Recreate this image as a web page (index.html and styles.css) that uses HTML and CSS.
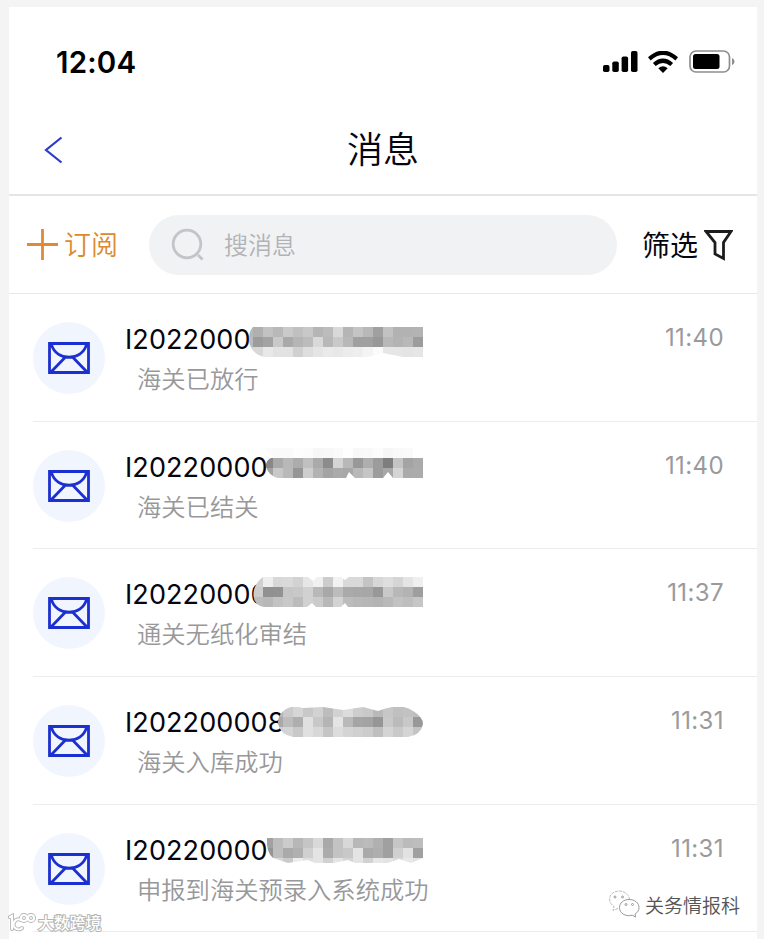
FILE: index.html
```html
<!DOCTYPE html>
<html lang="zh-CN">
<head>
    <meta charset="UTF-8">
    <meta name="viewport" content="width=device-width, initial-scale=1.0">
    <title>消息</title>
    <link rel="stylesheet" href="styles.css">
</head>
<body>
    <svg class="symbols" width="0" height="0">
        <symbol id="mail" viewBox="0 0 42 32">
            <path d="M1.5 1.5h39v29h-39zM3.500 2.500C8 19.500 34 19.500 38.500 2.500M3 30l14-14.500M39 30L25 15.500" fill="none" stroke="#1c2fd0" stroke-width="2.800"/>
        </symbol>
    </svg>

    <div class="screen">
        <div class="status-bar">
            <span class="clock">12:04</span>
            <svg class="signal" width="35" height="21" viewBox="0 0 35 21">
                <rect x="0" y="14" width="6.500" height="7" rx="1.800"/>
                <rect x="9.300" y="10.500" width="6.500" height="10.500" rx="1.800"/>
                <rect x="18.600" y="5.500" width="6.500" height="15.500" rx="1.800"/>
                <rect x="28" y="0" width="6.500" height="21" rx="1.800"/>
            </svg>
            <svg class="wifi" width="30" height="22" viewBox="0 0 30 22">
                <path d="M1.300 7.800Q15-4.200 28.700 7.800M6.300 13.500Q15 6 23.700 13.500" fill="none" stroke="#000" stroke-width="4.200"/>
                <path d="M10.300 17.300Q15 13.300 19.700 17.300L15 22z"/>
            </svg>
            <svg class="battery" width="46" height="23" viewBox="0 0 46 23">
                <rect x="1" y="1" width="39.500" height="21" rx="6" fill="none" stroke="#8e8e8e" stroke-width="1.700"/>
                <rect x="4" y="4" width="26.500" height="15" rx="2.500"/>
                <path d="M43 8q2.500 1 2.500 3.500t-2.500 3.500z" fill="#8e8e8e"/>
            </svg>
        </div>

        <div class="nav-bar">
            <svg class="back" width="20" height="28" viewBox="0 0 20 28">
                <path d="M17.500 1.500L2 14l15.500 12.500" fill="none" stroke="#2b3cc9" stroke-width="2.200"/>
            </svg>
            <h1>消息</h1>
        </div>

        <div class="toolbar">
            <div class="subscribe">
                <svg width="31" height="31" viewBox="0 0 31 31">
                    <path d="M15.500 0v31M0 15.500h31" stroke="#e08a35" stroke-width="2.800"/>
                </svg>
                <span>订阅</span>
            </div>
            <div class="search">
                <svg width="34" height="34" viewBox="0 0 34 34">
                    <circle cx="16" cy="16" r="13.800" fill="none" stroke="#c2c4c8" stroke-width="2.800"/>
                    <path d="M27 27l4.500 4.500" stroke="#c2c4c8" stroke-width="2.800"/>
                </svg>
                <span>搜消息</span>
            </div>
            <div class="filter">
                <span>筛选</span>
                <svg width="29" height="32" viewBox="0 0 29 32">
                    <path d="M2 2.500h25L19.500 13.500v16L11 25V13.500z" fill="none" stroke="#1c1c1e" stroke-width="2.800"/>
                </svg>
            </div>
        </div>

        <ul class="messages">
            <li>
                <div class="avatar"><svg width="42" height="32"><use href="#mail"/></svg></div>
                <div class="content">
                    <div class="number">I2022000<svg class="mosaic mosaic-1"></svg></div>
                    <div class="status">海关已放行</div>
                </div>
                <time>11:40</time>
            </li>
            <li>
                <div class="avatar"><svg width="42" height="32"><use href="#mail"/></svg></div>
                <div class="content">
                    <div class="number">I20220000<svg class="mosaic mosaic-2"></svg></div>
                    <div class="status">海关已结关</div>
                </div>
                <time>11:40</time>
            </li>
            <li>
                <div class="avatar"><svg width="42" height="32"><use href="#mail"/></svg></div>
                <div class="content">
                    <div class="number">I20220000<svg class="mosaic mosaic-3"></svg></div>
                    <div class="status">通关无纸化审结</div>
                </div>
                <time>11:37</time>
            </li>
            <li>
                <div class="avatar"><svg width="42" height="32"><use href="#mail"/></svg></div>
                <div class="content">
                    <div class="number">I202200008<svg class="mosaic mosaic-4"></svg></div>
                    <div class="status">海关入库成功</div>
                </div>
                <time>11:31</time>
            </li>
            <li>
                <div class="avatar"><svg width="42" height="32"><use href="#mail"/></svg></div>
                <div class="content">
                    <div class="number">I20220000<svg class="mosaic mosaic-5"></svg></div>
                    <div class="status">申报到海关预录入系统成功</div>
                </div>
                <time>11:31</time>
            </li>
        </ul>
    </div>

    <div class="account-mark">
        <svg width="32" height="28" viewBox="0 0 32 28">
            <path d="M10 18.500l-5 2 1-4C-1 12 0 2 11 1c6 0 10 4 10.500 8" fill="#fff" stroke="#bbb" stroke-width="1" stroke-dasharray="3 1"/>
            <path d="M21 9.500c6 0 10 3.500 10 8 0 3-1.500 5-4 6.500l.7 3-3.500-1.800C17 27 11.500 23 11.500 17.500c0-4.500 4-8 9.500-8z" fill="#fff" stroke="#999" stroke-width="1"/>
            <g fill="none" stroke="#999"><circle cx="7" cy="7" r="1"/><circle cx="14.500" cy="7" r="1"/><circle cx="18" cy="14.500" r="1"/><circle cx="24.500" cy="14.500" r="1"/></g>
        </svg>
        <span>关务情报科</span>
    </div>

    <div class="site-mark">
        <svg width="28" height="19" viewBox="0 0 28 19">
            <g fill="none" stroke="#b5b5b5" stroke-width="4" stroke-linecap="round">
                <path d="M2 4l2-1v13M13 7a5 5 0 1 0 1 8"/>
                <circle cx="16" cy="5" r="3"/><circle cx="23" cy="5" r="3"/>
            </g>
            <g fill="none" stroke="#fff" stroke-width="2.200" stroke-linecap="round">
                <path d="M2 4l2-1v13M13 7a5 5 0 1 0 1 8"/>
                <circle cx="16" cy="5" r="3"/><circle cx="23" cy="5" r="3"/>
            </g>
        </svg>
        <span>大数跨境</span>
    </div>

    <script src="mosaic.js"></script>
</body>
</html>
```
FILE: styles.css
```css
* {
    box-sizing: border-box;
}
body {
    margin: 0;
    height: 939px;
    overflow: hidden;
    padding: 7px 7px 0 9px;
    background-color: #f4f4f4;
    font-family: "Inter", "Noto Sans CJK SC", sans-serif;
    color: #050510;
}
.symbols {
    position: absolute;
}
.screen {
    height: 932px;
    overflow: hidden;
    background-color: #fff;
}
.status-bar {
    display: flex;
    align-items: center;
    height: 109px;
    padding: 0 22px 0 47px;
}
.clock {
    flex: 1;
    color: #000;
    font-size: 29.5px;
    font-weight: 600;
    letter-spacing: 0.2px;
}
.wifi {
    margin: 0 11px 0 10px;
}
.nav-bar {
    display: grid;
    grid-template-columns: 80px 1fr 80px;
    align-items: center;
    height: 80px;
    padding-bottom: 10px;
    border-bottom: 2px solid #e4e5e6;
}
.back {
    margin-left: 35px;
}
h1 {
    margin: 0;
    text-align: center;
    font-size: 36px;
    line-height: 54px;
    font-weight: 350;
}
.toolbar {
    display: flex;
    align-items: center;
    height: 98px;
    padding: 0 23px 0 18px;
    border-bottom: 1px solid #e8e8e9;
}
.subscribe {
    display: flex;
    align-items: center;
    gap: 6px;
    width: 122px;
    color: #dc8a30;
    font-size: 27px;
    font-weight: 350;
}
.search {
    display: flex;
    align-items: center;
    gap: 19px;
    width: 468px;
    height: 60px;
    padding-left: 22px;
    border-radius: 30px;
    background-color: #f1f2f4;
    color: #b2b3b6;
    font-size: 24px;
    font-weight: 350;
}
.subscribe span,
.search span,
.filter span {
    margin-top: -2px;
}
.filter {
    display: flex;
    align-items: center;
    gap: 6px;
    margin-left: 25px;
    font-size: 28px;
}
.messages {
    margin: 0 0 0 24px;
    padding: 0;
    list-style: none;
}
.messages li {
    display: flex;
    height: 127.7px;
    padding: 28px 33px 0 0;
    border-bottom: 1px solid #ececed;
}
.avatar {
    display: flex;
    align-items: center;
    justify-content: center;
    width: 72px;
    height: 72px;
    border-radius: 50%;
    background-color: #f1f5fe;
}
.content {
    flex: 1;
    margin-left: 20px;
}
.number {
    position: relative;
    height: 36px;
    font-size: 27px;
    line-height: 36px;
    letter-spacing: 0.1px;
}
.mosaic {
    position: absolute;
    left: 118px;
    width: 180px;
    height: 30px;
}
.mosaic-1 { top: 5px; }
.mosaic-2 { top: -2px; }
.mosaic-3 { top: 0; }
.mosaic-4 { top: 2px; }
.mosaic-5 { top: 5px; }
.status {
    margin: 2px 0 0 12px;
    color: #98989a;
    font-size: 24.3px;
    line-height: 38px;
    font-weight: 350;
}
time {
    color: #9a9a9c;
    font-size: 24px;
    line-height: 31px;
    letter-spacing: 0.4px;
}
.account-mark {
    position: absolute;
    left: 608px;
    top: 890px;
    display: flex;
    align-items: center;
    gap: 5px;
    color: #555;
    font-size: 19px;
    font-weight: 350;
}
.site-mark {
    position: absolute;
    left: 8px;
    top: 911px;
    display: flex;
    align-items: center;
    gap: 2px;
    color: #fff;
    font-size: 15.8px;
    font-weight: 500;
    -webkit-text-stroke: 2px #b5b5b5;
    paint-order: stroke fill;
}
```
FILE: mosaic.js
```javascript
// Grey level of each 10px block, one string per row of blocks
const mosaics = [
    {
        path: 'M10 0H180V30H160L140 26L125 30H25C12 30 6 20 6 12C6 6 8 2 10 0z',
        rows: [
            'b8 b0 c2 b8 ca c0 c8 b5 bc d9 b5 c4 b8 a0 c2 b2 b2 b3',
            'bb 9c a3 c9 a9 b5 bc d9 b8 c9 b8 a0 a0 98 b8 b3 b8 9c',
            'd0 d8 e8 e2 e2 d0 de e5 ea e8 ec ee f4 fb e6 e6 e4 e6'
        ]
    },
    {
        path: 'M20 0H170L180 10V30H150L145 24L140 30H112L106 24L103 30H35Q26 28 23 19Q22 12 30 9z',
        rows: [
            'ff fe fb fa fa fd fc f7 f8 fa fe f8 f9 fc f6 f9 fa ff',
            'ff b0 88 aa b8 ac c0 aa 8c d4 b8 98 ae 9c 7e c4 a4 aa',
            'ff b8 a2 c8 b9 96 ce b3 a4 aa a8 b8 c5 9c a8 d5 aa ab'
        ]
    },
    {
        path: 'M20 0H65L70 4L74 0H98L102 3L106 0H180V30H105L102 26L98 30H73L69 26L64 30H22C8 30 6 10 20 0z',
        rows: [
            'd4 d0 ee d8 da d2 e6 f0 cc f2 d9 d9 c4 d7 de d5 e4 ef',
            'c4 cc 91 92 c6 c8 d1 b8 a8 bc aa a8 a7 98 c9 b8 b3 9e',
            'bd bc b8 c3 c8 bc d1 cb b8 d3 bc b8 b6 b3 b9 c2 be c6'
        ]
    },
    {
        path: 'M43 2Q50-2 60 1L80 0L100 3L120 0L135 4Q158-5 170 4Q180 10 180 17Q178 28 165 30H50Q38 28 35 17Q34 8 43 2z',
        rows: [
            'ff ff ff b8 cb d6 c8 d2 bd d2 dc cd c9 b9 c7 c0 c2 bd',
            'ff ff ff a9 bd ae e0 c8 b5 e4 b9 a5 a3 96 c9 bb c8 98',
            'ff ff ff cf d4 c8 e0 d8 c5 dc d4 d0 cc bf d4 c9 d5 c4'
        ]
    },
    {
        path: 'M24 0H180V20L168 25L156 21L145 25H112L105 22L90 25H72L65 22L45 25L30 20Q23 14 24 0z',
        rows: [
            'ff ac a1 bd cb b7 c5 d9 a9 c3 d8 b8 bb b0 a0 c6 bb bd',
            'ff aa 95 be aa b0 d0 e4 ac c3 c8 e4 aa ae a0 d0 e2 a0',
            'ff d6 ca d8 ca ed df e4 d1 e4 d5 e4 d2 e7 e4 dc e8 e3'
        ]
    }
];

const NS = 'http://www.w3.org/2000/svg';

document.querySelectorAll('.mosaic').forEach((svg, index) => {
    const { path, rows } = mosaics[index];
    svg.innerHTML = `<clipPath id="clip-${index}"><path d="${path}"/></clipPath>`;

    const group = document.createElementNS(NS, 'g');
    group.setAttribute('clip-path', `url(#clip-${index})`);
    rows.forEach((row, y) => {
        row.split(' ').forEach((level, x) => {
            const block = document.createElementNS(NS, 'rect');
            block.setAttribute('x', x * 10);
            block.setAttribute('y', y * 10);
            block.setAttribute('width', 10);
            block.setAttribute('height', 10);
            block.setAttribute('fill', `#${level}${level}${level}`);
            group.appendChild(block);
        });
    });
    svg.appendChild(group);
});
```
